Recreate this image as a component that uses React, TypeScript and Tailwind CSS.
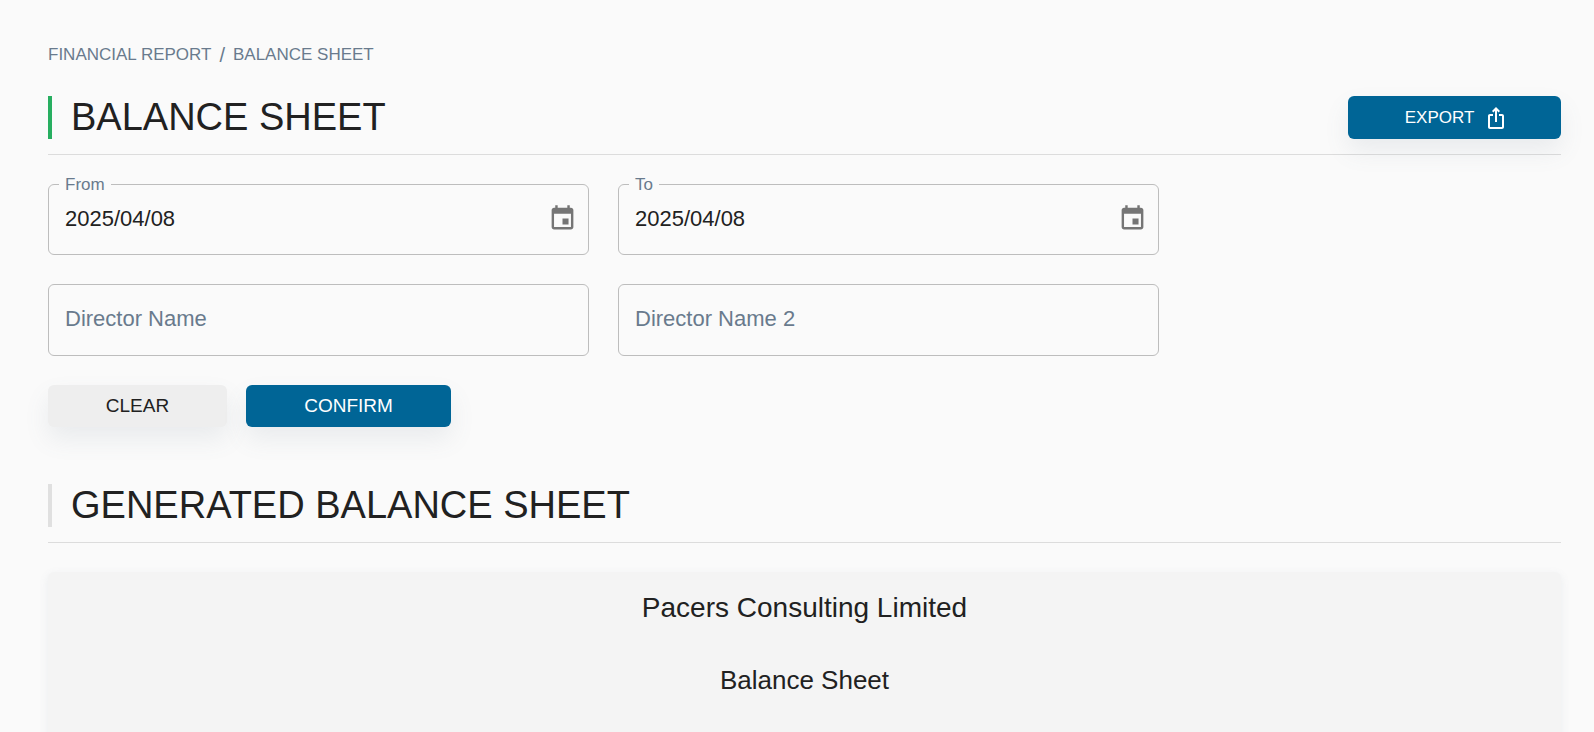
import { useState } from "react"

type SectionTitleProps = {
  title: string
  accent: string
  children?: React.ReactNode
}

type FieldProps = {
  id: string
  label: string
  value: string
  onChange: (value: string) => void
}

const buttonBase =
  "flex items-center justify-center rounded-md uppercase shadow-[0_12px_24px_rgba(100,116,139,0.11)]"

function EventIcon() {
  return (
    <svg viewBox="0 0 24 24" className="size-[29px]" fill="currentColor" aria-hidden="true">
      <path d="M17 12h-5v5h5v-5zM16 1v2H8V1H6v2H5c-1.11 0-1.99.9-1.99 2L3 19c0 1.1.89 2 2 2h14c1.1 0 2-.9 2-2V5c0-1.1-.9-2-2-2h-1V1h-2zm3 18H5V8h14v11z" />
    </svg>
  )
}

function ShareIcon() {
  return (
    <svg viewBox="0 0 24 24" className="size-6" fill="currentColor" aria-hidden="true">
      <path d="M16 5l-1.42 1.42-1.59-1.59V16h-1.98V4.83L9.42 6.42 8 5l4-4 4 4zm4 5v11c0 1.1-.9 2-2 2H6c-1.11 0-2-.9-2-2V10c0-1.11.89-2 2-2h3v2H6v11h12V10h-3V8h3c1.1 0 2 .89 2 2z" />
    </svg>
  )
}

function SectionTitle({ title, accent, children }: SectionTitleProps) {
  return (
    <div className="flex items-center justify-between border-b border-[#dcdcdc] pb-[15px]">
      <h1 className={`border-l-4 pl-[19px] text-[38px] leading-[43px] uppercase ${accent}`}>{title}</h1>
      {children}
    </div>
  )
}

function DateField({ id, label, value, onChange }: FieldProps) {
  return (
    <div className="relative flex h-[71px] items-center rounded-md border border-[#bdbdbd] pr-[11px] pl-4">
      <label
        htmlFor={id}
        className="absolute -top-2.5 left-2.5 bg-[#fafafa] px-1.5 text-[17px] leading-5 text-[#697a8d]"
      >
        {label}
      </label>
      <input
        id={id}
        value={value}
        onChange={(e) => onChange(e.target.value)}
        className="min-w-0 flex-1 pb-0.5 text-[22px] leading-8 outline-none"
      />
      <button type="button" aria-label={`Choose date, ${label}`} className="pb-0.5 text-[#757575]">
        <EventIcon />
      </button>
    </div>
  )
}

function TextField({ id, label, value, onChange }: FieldProps) {
  return (
    <div className="flex h-[72px] items-center rounded-md border border-[#bdbdbd] px-4">
      <input
        id={id}
        aria-label={label}
        placeholder={label}
        value={value}
        onChange={(e) => onChange(e.target.value)}
        className="min-w-0 flex-1 pb-0.5 text-[22px] leading-8 outline-none placeholder:text-[#697a8d]"
      />
    </div>
  )
}

export default function App() {
  const [from, setFrom] = useState("2025/04/08")
  const [to, setTo] = useState("2025/04/08")
  const [director, setDirector] = useState("")
  const [director2, setDirector2] = useState("")

  const handleClear = () => {
    setDirector("")
    setDirector2("")
  }

  return (
    <div className="h-screen overflow-hidden bg-[#fafafa] pt-[41px] pr-[33px] pl-12 font-['Liberation_Sans',Arial,sans-serif] text-[#212121]">
      {/* Breadcrumb */}
      <nav className="flex items-center gap-2 text-[17px] leading-7 text-[#697a8d] uppercase">
        <a href="#financial-report">Financial Report</a>
        <span className="text-[20px]">/</span>
        <a href="#balance-sheet">Balance Sheet</a>
      </nav>

      <main className="mt-[27px]">
        <SectionTitle title="Balance Sheet" accent="border-[#27ae60]">
          <button
            type="button"
            className={`${buttonBase} h-[43px] w-[213px] gap-2.5 bg-[#006596] pl-1 text-[17px] text-white`}
          >
            Export
            <ShareIcon />
          </button>
        </SectionTitle>

        {/* Report filters */}
        <form onSubmit={(e) => e.preventDefault()}>
          <div className="mt-[29px] grid max-w-[1111px] grid-cols-2 gap-[29px]">
            <DateField id="from" label="From" value={from} onChange={setFrom} />
            <DateField id="to" label="To" value={to} onChange={setTo} />
            <TextField id="director" label="Director Name" value={director} onChange={setDirector} />
            <TextField id="director-2" label="Director Name 2" value={director2} onChange={setDirector2} />
          </div>
          <div className="mt-[29px] flex gap-[19px] text-[19px]">
            <button
              type="button"
              onClick={handleClear}
              className={`${buttonBase} h-[42px] w-[179px] bg-[#eeeeee]`}
            >
              Clear
            </button>
            <button type="submit" className={`${buttonBase} h-[42px] w-[205px] bg-[#006596] text-white`}>
              Confirm
            </button>
          </div>
        </form>

        {/* Generated report */}
        <section className="mt-[57px]">
          <SectionTitle title="Generated Balance Sheet" accent="border-[#e0e0e0]" />
          <div className="mt-[29px] min-h-[400px] rounded-md bg-[#f4f4f4] pt-4 text-center shadow-[0_3px_10px_rgba(100,116,139,0.1)]">
            <h2 className="text-[28px] leading-10">Pacers Consulting Limited</h2>
            <h3 className="mt-8 text-[26px] leading-10">Balance Sheet</h3>
          </div>
        </section>
      </main>
    </div>
  )
}
